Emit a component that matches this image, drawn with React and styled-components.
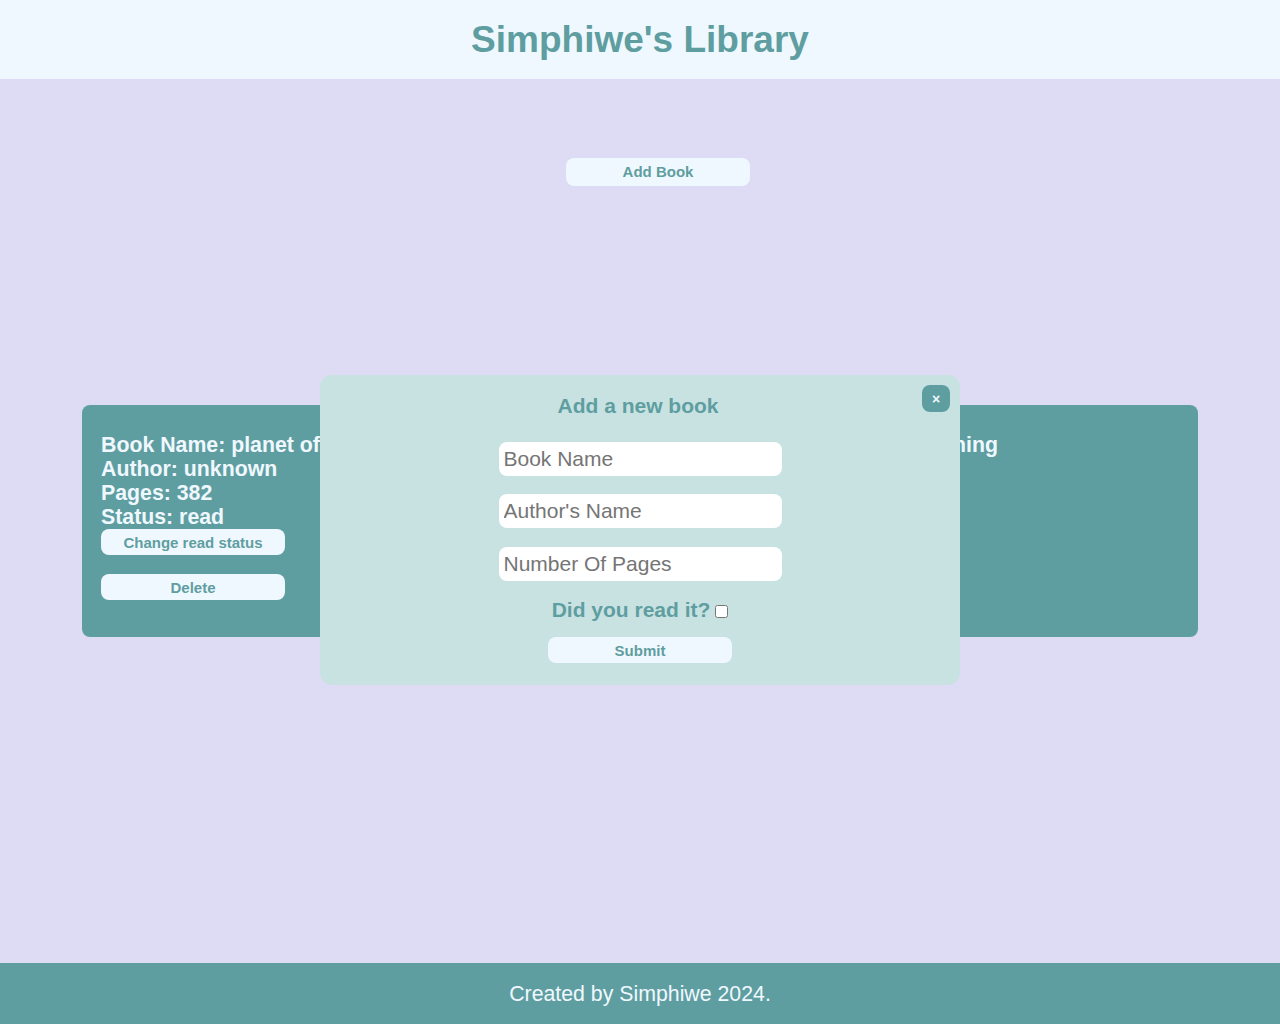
import React from 'react';
import styled, { createGlobalStyle } from 'styled-components';

const GlobalStyle = createGlobalStyle`
    html, body {
        margin: 0;
        padding: 0;
        height: 100%;
    }
    body {
        font-family: "Liberation Sans", Arial, sans-serif;
        background-color: #dedcf5;
    }
    #root {
        min-height: 100vh;
        display: flex;
        flex-direction: column;
    }
`;

const Header = styled.header`
    background-color: #f0f8ff;
    height: 79px;
    display: flex;
    align-items: center;
    justify-content: center;
    h1 {
        margin: 0;
        font-size: 37px;
        color: #5f9ea0;
        font-weight: bold;
    }
`;

const Main = styled.main`
    flex: 1;
    display: flex;
    flex-direction: column;
    align-items: center;
    padding: 79px 82px 0;
`;

const PaleButton = styled.button`
    width: 184px;
    height: ${props => props.tall ? '28px' : '26px'};
    border: none;
    border-radius: 8px;
    background-color: #f0f8ff;
    color: #5f9ea0;
    font-family: "Liberation Sans", Arial, sans-serif;
    font-weight: bold;
    font-size: 15px;
    cursor: pointer;
    padding: 0;
`;

const AddButton = styled(PaleButton)`
    margin-left: 36px;
    padding-bottom: 2px;
`;

const Shelf = styled.section`
    align-self: stretch;
    display: grid;
    grid-template-columns: 1fr 1fr;
    gap: 20px;
    margin-top: 219px;
`;

const Card = styled.article`
    background-color: #5f9ea0;
    border-radius: 8px;
    height: 232px;
    box-sizing: border-box;
    padding: 28px 19px;
    color: #f0f8ff;
    p {
        margin: 0;
        font-size: 21.3px;
        font-weight: bold;
        line-height: 24px;
        white-space: nowrap;
    }
`;

const CardActions = styled.div`
    display: flex;
    flex-direction: column;
    gap: 19px;
`;

const Footer = styled.footer`
    background-color: #5f9ea0;
    height: 61px;
    padding-top: 1px;
    box-sizing: border-box;
    display: flex;
    align-items: center;
    justify-content: center;
    color: #f0f8ff;
    font-size: 21.3px;
`;

const Modal = styled.div`
    position: fixed;
    top: 375px;
    left: 320px;
    width: 640px;
    height: 310px;
    box-sizing: border-box;
    background-color: #c8e2e2;
    border-radius: 12px;
    display: flex;
    flex-direction: column;
    align-items: center;
    padding-top: 18px;
`;

const ModalTitle = styled.h2`
    margin: 0 0 24px;
    margin-left: -4px;
    font-size: 21px;
    line-height: 25px;
    color: #5f9ea0;
    font-weight: bold;
`;

const CloseButton = styled.button`
    position: absolute;
    top: 10px;
    right: 10px;
    width: 28px;
    height: 27px;
    border: none;
    border-radius: 8px;
    background-color: #5f9ea0;
    color: #f0f8ff;
    font-size: 14px;
    font-weight: bold;
    padding: 0;
    font-family: "Liberation Sans", Arial, sans-serif;
`;

const Form = styled.form`
    display: flex;
    flex-direction: column;
    align-items: center;
`;

const Input = styled.input`
    width: 283px;
    height: 34px;
    box-sizing: border-box;
    border: none;
    border-radius: 8px;
    background-color: #ffffff;
    padding: 0 5px;
    margin-bottom: ${props => props.gap || '18px'};
    font-family: "Liberation Sans", Arial, sans-serif;
    font-size: 21px;
    color: #333;
    outline: none;
    &::placeholder {
        color: #757575;
    }
`;

const ThirdInput = styled(Input)`
    margin-top: 1px;
`;

const CheckRow = styled.label`
    display: flex;
    align-items: center;
    gap: 5px;
    margin-top: 3px;
    font-size: 21px;
    font-weight: bold;
    color: #5f9ea0;
    input {
        width: 13px;
        height: 13px;
        margin: 3px 0 0;
    }
`;

const SubmitButton = styled(PaleButton)`
    margin-top: 15px;
`;

const books = [
    { name: 'planet of the apes', author: 'unknown', pages: 382, status: 'read' },
    { name: 'the art of beginning', author: 'unknown', pages: 200, status: 'not read' },
];

function BookCard({ book }) {
    return (
        <Card>
            <p>Book Name: {book.name}</p>
            <p>Author: {book.author}</p>
            <p>Pages: {book.pages}</p>
            <p>Status: {book.status}</p>
            <CardActions>
                <PaleButton>Change read status</PaleButton>
                <PaleButton>Delete</PaleButton>
            </CardActions>
        </Card>
    );
}

export default function App() {
    return (
        <>
            <GlobalStyle />
            <Header>
                <h1>Simphiwe's Library</h1>
            </Header>
            <Main>
                <AddButton tall>Add Book</AddButton>
                <Shelf>
                    {books.map((b, i) => <BookCard key={i} book={b} />)}
                </Shelf>
            </Main>
            <Footer>Created by Simphiwe 2024.</Footer>
            <Modal>
                <CloseButton>×</CloseButton>
                <ModalTitle>Add a new book</ModalTitle>
                <Form onSubmit={e => e.preventDefault()}>
                    <Input placeholder="Book Name" />
                    <Input placeholder="Author's Name" />
                    <ThirdInput placeholder="Number Of Pages" gap="14px" />
                    <CheckRow>
                        Did you read it?
                        <input type="checkbox" />
                    </CheckRow>
                    <SubmitButton>Submit</SubmitButton>
                </Form>
            </Modal>
        </>
    );
}
